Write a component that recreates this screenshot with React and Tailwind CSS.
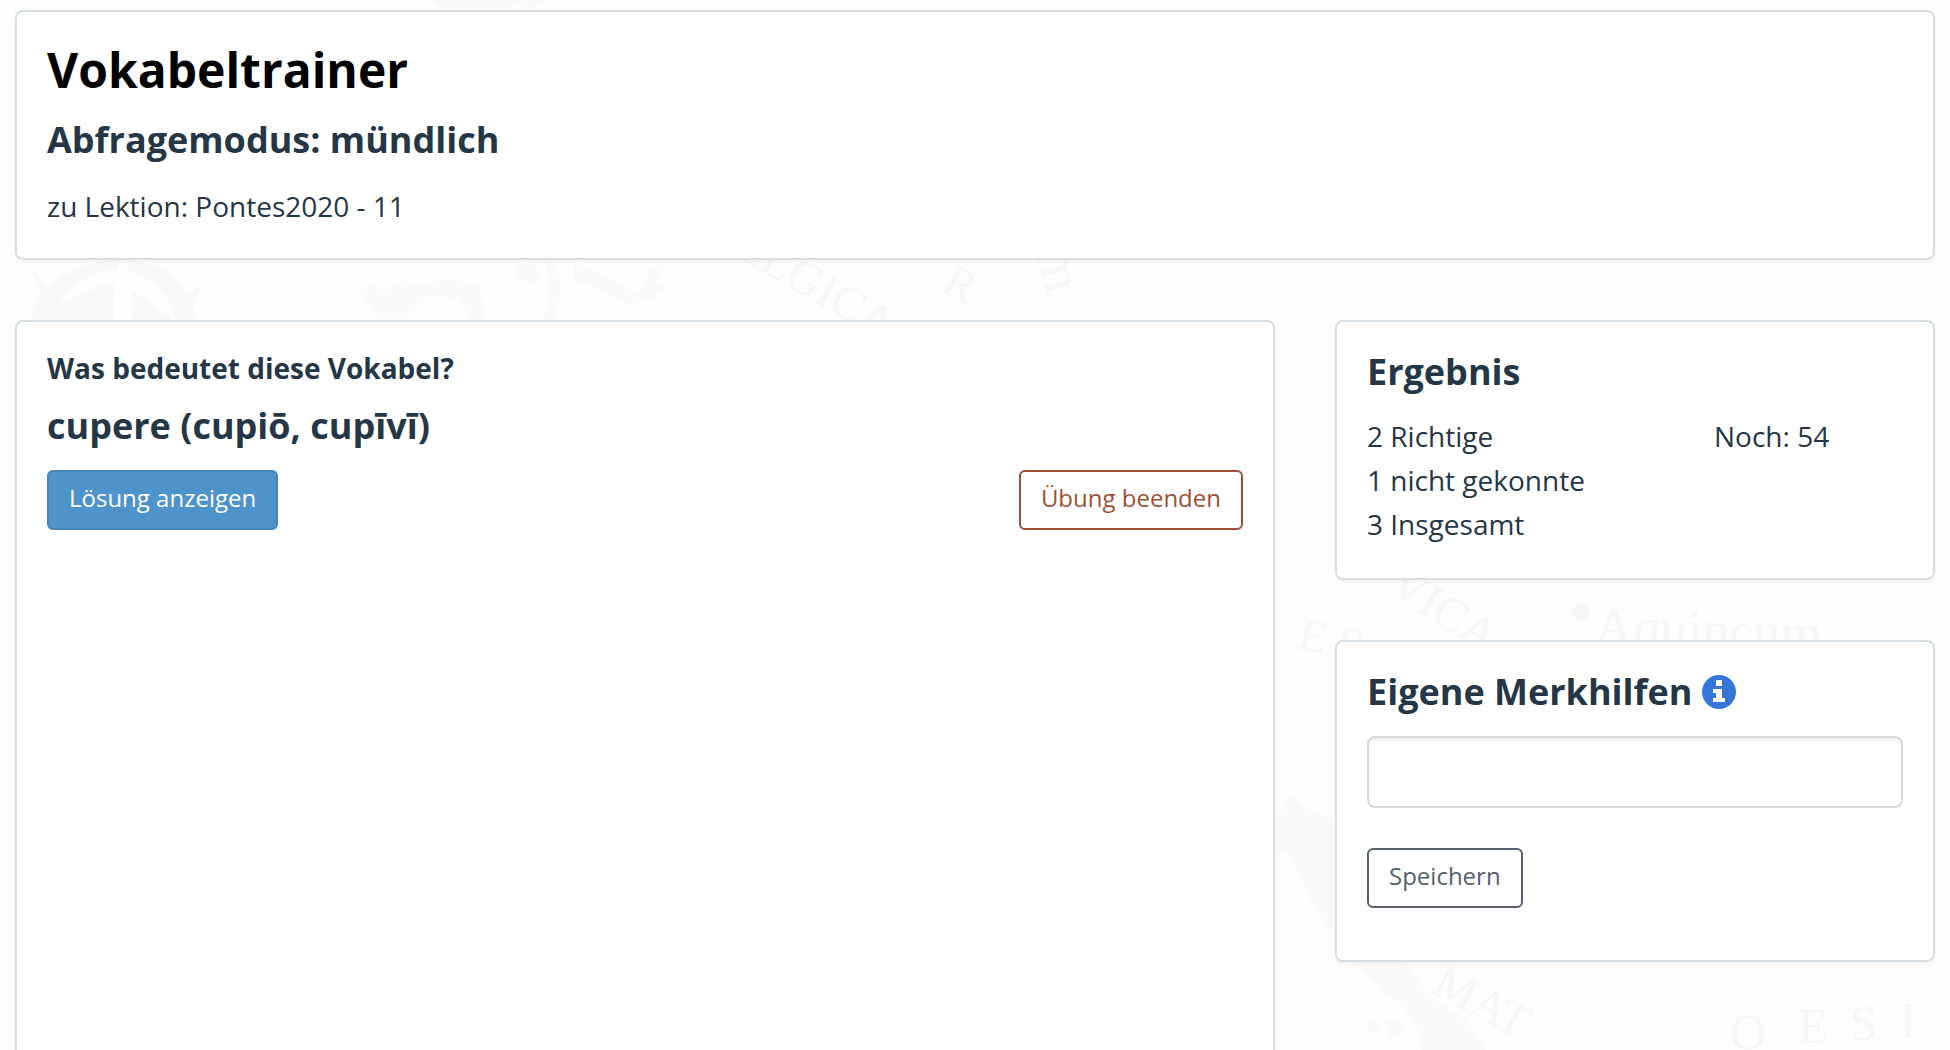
import { useState } from "react";

const mapLabels = [
  { text: "ELGICA", x: 732, y: 254, size: 48, rotate: 30 },
  { text: "R", x: 940, y: 290, size: 46, rotate: 28 },
  { text: "m", x: 1036, y: 252, size: 58, rotate: 75 },
  { text: "E S", x: 1296, y: 648, size: 46, rotate: 12 },
  { text: "VICA", x: 1386, y: 592, size: 48, rotate: 32 },
  { text: "Aquincum", x: 1594, y: 644, size: 54, rotate: 2 },
  { text: "MAT", x: 1430, y: 992, size: 48, rotate: 28 },
  { text: "O", x: 1730, y: 1049, size: 50, rotate: 0 },
  { text: "E", x: 1798, y: 1043, size: 50, rotate: 0 },
  { text: "S", x: 1850, y: 1040, size: 50, rotate: 0 },
  { text: "I", x: 1900, y: 1037, size: 50, rotate: 0 },
];

function MapBackground() {
  return (
    <svg
      className="absolute inset-0 -z-10 w-full h-full"
      viewBox="0 0 1950 1050"
      preserveAspectRatio="xMidYMid slice"
      aria-hidden="true"
    >
      <rect width="1950" height="1050" fill="#fdfdfd" />
      <g fill="#fafafa">
        <path d="M358 292l14-8 12 6 18-9 26 2 20-4 30 6 6 24 4 12h-14l-16-22-30-4-22 24h-26l-14-16z" />
        <path d="M432 0h118l-14 8-20-2-14 4-60-2z" />
        <path d="M516 266l16-4 8 12-10 10-14-6zM545 258h10l6 30-6 34h-12l6-30z" />
        <path d="M574 262l40 18 24 14 12-24 12-4-6 18 14 4-24 14-20 2-30-16-22-8z" />
        <path d="M1278 815l14-20 14 14 20 6 10 16v110l-22-34-24-50-12-6z" />
        <path d="M1354 960h50l26 36 36 24 20 30h-64l-6-24-16-24-16-8zM1367 1022l10 0 2 10-10 2zM1384 1022l16-4 4 12-14 8z" />
      </g>
      {/* compass rose */}
      <g fill="#f9f9f9">
        <path d="M30 320c8-34 46-60 88-60v10c-34 2-56 20-66 50z" />
        <path d="M128 260c38 2 58 22 68 60h-20c-8-26-22-44-48-48z" />
        <path d="M64 302l40-18h10v36H60zM132 290l34 24 4 6h-38z" />
        <path d="M30 268l26 28 14 24H50zM202 284l-14 36h-10l4-20z" />
      </g>
      <path d="M120 260h6l4 60h-14z" fill="#fefefe" />
      <circle cx="1581" cy="612" r="9" fill="#f6f6f6" />
      <g fill="#f7f7f7" className="font-['Liberation_Serif',serif]">
        {mapLabels.map(({ text, x, y, size, rotate }) => (
          <text
            key={text}
            x={x}
            y={y}
            fontSize={size}
            transform={`rotate(${rotate} ${x} ${y})`}
          >
            {text}
          </text>
        ))}
      </g>
    </svg>
  );
}

function InfoIcon() {
  return (
    <svg className="size-[34px]" viewBox="0 0 34 34" aria-hidden="true">
      <circle cx="17" cy="17" r="17" fill="#3477d6" />
      <path
        d="M14 5h6v6h-6zM11 14h9v9h3v4H11v-4h3v-5h-3z"
        fill="#fff"
      />
    </svg>
  );
}

function Card({ className = "", children }) {
  return (
    <section
      className={`rounded-lg border-2 border-[#d7dfe5] bg-white px-[30px] shadow-[0_2px_4px_rgba(0,0,0,0.05)] ${className}`}
    >
      {children}
    </section>
  );
}

function Button({ className = "", children, ...props }) {
  return (
    <button
      type="button"
      className={`h-[60px] rounded-md border-2 px-5 pb-1 text-[24px] leading-[36px] cursor-pointer ${className}`}
      {...props}
    >
      {children}
    </button>
  );
}

export default function App() {
  const [hint, setHint] = useState("");

  return (
    <div className="relative isolate flex h-screen flex-col gap-[60px] overflow-hidden px-[15px] pt-[10px] font-['Open_Sans',sans-serif] text-[28px] leading-[44px] text-[#253746]">
      <MapBackground />
      <Card className="shrink-0 pt-7 pb-[30px]">
        <h1 className="text-[48px] leading-[60px] font-bold text-black">
          Vokabeltrainer
        </h1>
        <h2 className="mt-4 text-[36px] leading-[48px] font-bold">
          Abfragemodus: mündlich
        </h2>
        <p className="mt-5">zu Lektion: Pontes2020 - 11</p>
      </Card>

      <div className="grid min-h-0 grow grid-cols-3 gap-[60px]">
        <Card className="col-span-2 -mb-10 pt-6">
          <h3 className="font-bold">Was bedeutet diese Vokabel?</h3>
          <p className="mt-3 text-[36px] leading-[48px] font-bold">
            cupere (cupiō, cupīvī)
          </p>
          <div className="mt-5 flex justify-between">
            <Button className="border-[#4585b9] bg-[#4f93cb] text-white">
              Lösung anzeigen
            </Button>
            <Button className="border-[#9d4f35] bg-white text-[#9d4f35]">
              Übung beenden
            </Button>
          </div>
        </Card>

        <div className="flex flex-col gap-[60px]">
          <Card className="pt-[26px] pb-8">
            <h2 className="text-[36px] leading-[48px] font-bold">Ergebnis</h2>
            <div className="mt-[18px] grid grid-cols-[347fr_189fr]">
              <ul>
                <li>2 Richtige</li>
                <li>1 nicht gekonnte</li>
                <li>3 Insgesamt</li>
              </ul>
              <p>Noch: 54</p>
            </div>
          </Card>

          <Card className="pt-[26px] pb-[52px]">
            <h2 className="flex items-center gap-[10px] text-[36px] leading-[48px] font-bold">
              <label htmlFor="hint">Eigene Merkhilfen</label>
              <InfoIcon />
            </h2>
            <input
              id="hint"
              type="text"
              value={hint}
              onChange={(e) => setHint(e.target.value)}
              className="mt-5 block h-[72px] w-full rounded-lg border-2 border-[#d5d9dc] bg-white px-5 shadow-[inset_0_2px_3px_rgba(0,0,0,0.08)]"
            />
            <Button className="mt-10 border-[#55606c] bg-white text-[#55606c]">
              Speichern
            </Button>
          </Card>
        </div>
      </div>
    </div>
  );
}
